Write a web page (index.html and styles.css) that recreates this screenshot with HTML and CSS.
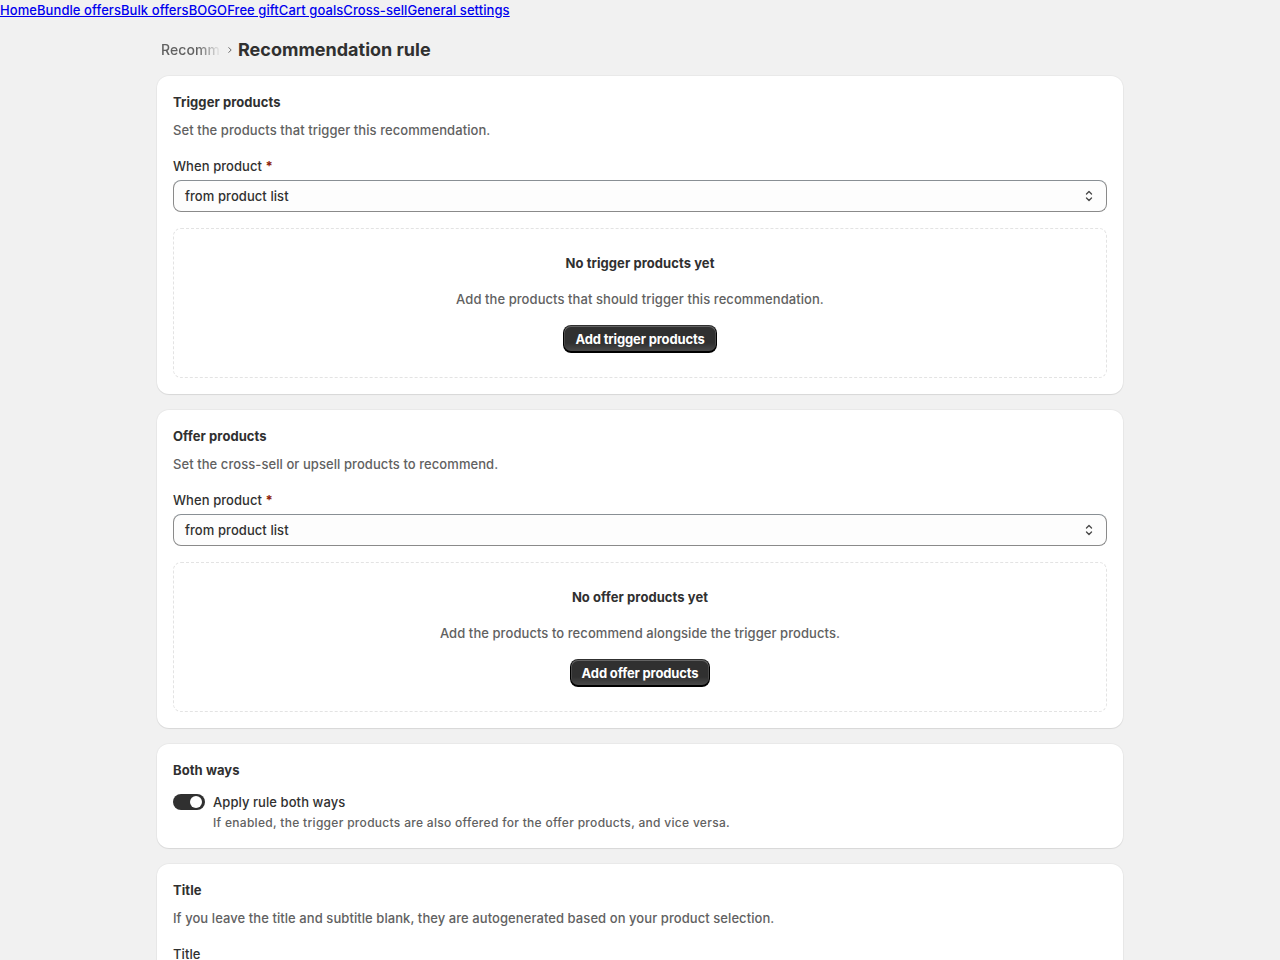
FILE: index.html
```html
<!DOCTYPE html>
<html lang="en">
<head>
    <meta charset="UTF-8">
    <title>Recommendation rule</title>
    <link rel="stylesheet" href="styles.css">
</head>
<body>

    <!-- App navigation -->
    <nav class="app-nav">
        <a href="#">Home</a><a href="#">Bundle offers</a><a href="#">Bulk offers</a><a href="#">BOGO</a><a href="#">Free gift</a><a href="#">Cart goals</a><a href="#">Cross-sell</a><a href="#">General settings</a>
    </nav>

    <div class="page">

        <!-- Header -->
        <div class="page-header">
            <span class="crumb">Recommendations</span>
            <span class="crumb-sep">
                <svg width="12" height="12" viewBox="0 0 20 20"><path d="M8 6l4 4-4 4" fill="none" stroke="#616161" stroke-width="1.6" stroke-linecap="round" stroke-linejoin="round"/></svg>
            </span>
            <h1>Recommendation rule</h1>
        </div>

        <!-- Trigger products -->
        <div class="card">
            <h2>Trigger products</h2>
            <p class="sub">Set the products that trigger this recommendation.</p>
            <div class="field">
                <label>When product <span class="req">*</span></label>
                <div class="select">
                    <span>from product list</span>
                    <svg width="20" height="20" viewBox="0 0 20 20"><path d="M7.5 8l2.5-2.5 2.5 2.5M7.5 12l2.5 2.5 2.5-2.5" fill="none" stroke="#4a4a4a" stroke-width="1.4" stroke-linecap="round" stroke-linejoin="round"/></svg>
                </div>
            </div>
            <div class="empty">
                <h3>No trigger products yet</h3>
                <p>Add the products that should trigger this recommendation.</p>
                <button class="btn-dark">Add trigger products</button>
            </div>
        </div>

        <!-- Offer products -->
        <div class="card">
            <h2>Offer products</h2>
            <p class="sub">Set the cross-sell or upsell products to recommend.</p>
            <div class="field">
                <label>When product <span class="req">*</span></label>
                <div class="select">
                    <span>from product list</span>
                    <svg width="20" height="20" viewBox="0 0 20 20"><path d="M7.5 8l2.5-2.5 2.5 2.5M7.5 12l2.5 2.5 2.5-2.5" fill="none" stroke="#4a4a4a" stroke-width="1.4" stroke-linecap="round" stroke-linejoin="round"/></svg>
                </div>
            </div>
            <div class="empty">
                <h3>No offer products yet</h3>
                <p>Add the products to recommend alongside the trigger products.</p>
                <button class="btn-dark">Add offer products</button>
            </div>
        </div>

        <!-- Both ways -->
        <div class="card">
            <h2>Both ways</h2>
            <div class="toggle-row">
                <div class="toggle"><div class="knob"></div></div>
                <div>
                    <div class="toggle-label">Apply rule both ways</div>
                    <div class="help">If enabled, the trigger products are also offered for the offer products, and vice versa.</div>
                </div>
            </div>
        </div>

        <!-- Title -->
        <div class="card">
            <h2>Title</h2>
            <p class="sub">If you leave the title and subtitle blank, they are autogenerated based on your product selection.</p>
            <div class="field">
                <label>Title</label>
                <div class="input"></div>
            </div>
        </div>

    </div>
</body>
</html>
```

FILE: styles.css
```css
body {
    margin: 0;
    background-color: #f1f1f1;
    font-family: Inter, "Noto Sans", sans-serif;
    font-size: 13px;
    font-weight: 450;
    line-height: 20px;
    letter-spacing: 0.07px;
    color: #303030;
}
.app-nav {
    display: flex;
    line-height: 20px;
}
.app-nav a {
    color: #0000ee;
    text-decoration: underline;
}
.page {
    max-width: 966px;
    margin: 0 auto;
    padding-top: 20px;
    padding-bottom: 40px;
}
.page-header {
    display: flex;
    align-items: center;
    height: 20px;
    padding: 0 4px 16px;
}
.crumb {
    width: 60px;
    overflow: hidden;
    white-space: nowrap;
    font-size: 14px;
    color: #616161;
    -webkit-mask-image: linear-gradient(to right, #000 60%, transparent);
    mask-image: linear-gradient(to right, #000 60%, transparent);
}
.crumb-sep {
    display: flex;
    width: 17px;
    justify-content: center;
}
.page-header h1 {
    margin: 0;
    font-size: 18px;
    font-weight: 700;
    line-height: 28px;
    letter-spacing: 0;
    color: #303030;
}
.card {
    background-color: #fff;
    border-radius: 12px;
    padding: 16px;
    margin-bottom: 16px;
    box-shadow: 0 1px 1px 0 rgba(26, 26, 26, 0.08), 0 0 0 1px rgba(0, 0, 0, 0.03);
}
.card h2 {
    margin: 0;
    font-size: 13px;
    font-weight: 650;
    line-height: 20px;
}
.card .sub {
    margin: 8px 0 0;
    color: #616161;
}
.field {
    margin-top: 16px;
}
.field label {
    display: block;
    margin-bottom: 4px;
}
.req {
    color: #8e1f0b;
    font-weight: 650;
}
.select, .input {
    display: flex;
    align-items: center;
    justify-content: space-between;
    height: 30px;
    padding: 0 11px;
    border: 1px solid #8a8a8a;
    border-top-color: #898f94;
    border-radius: 8px;
    background-color: #fdfdfd;
}
.select svg {
    margin-right: -4px;
}
.empty {
    margin-top: 16px;
    border: 1px dashed #e3e3e3;
    border-radius: 8px;
    padding: 24px;
    display: flex;
    flex-direction: column;
    align-items: center;
    text-align: center;
}
.empty h3 {
    margin: 0;
    font-size: 13px;
    font-weight: 650;
}
.empty p {
    margin: 16px 0;
    color: #616161;
}
.btn-dark {
    font-family: inherit;
    font-size: 13px;
    font-weight: 650;
    line-height: 20px;
    letter-spacing: -0.15px;
    color: #fff;
    height: 28px;
    padding: 0 12px;
    border: none;
    border-radius: 8px;
    background: linear-gradient(180deg, rgba(48, 48, 48, 0) 63.53%, rgba(255, 255, 255, 0.15) 100%), #303030;
    box-shadow: 0 -1px 0 1px #000 inset, 0 0 0 1px #303030 inset, 0 0.5px 0 1.5px rgba(255, 255, 255, 0.25) inset;
    cursor: pointer;
}
.toggle-row {
    display: flex;
    gap: 8px;
    margin-top: 12px;
}
.toggle {
    width: 32px;
    height: 16px;
    margin-top: 2px;
    border-radius: 8px;
    background-color: #303030;
    position: relative;
    flex-shrink: 0;
}
.toggle .knob {
    position: absolute;
    top: 2px;
    right: 3px;
    width: 12px;
    height: 12px;
    border-radius: 50%;
    background-color: #fff;
}
.help {
    font-size: 12px;
    line-height: 16px;
    letter-spacing: 0.3px;
    color: #616161;
    margin-top: 3px;
    padding-bottom: 1px;
}
```
